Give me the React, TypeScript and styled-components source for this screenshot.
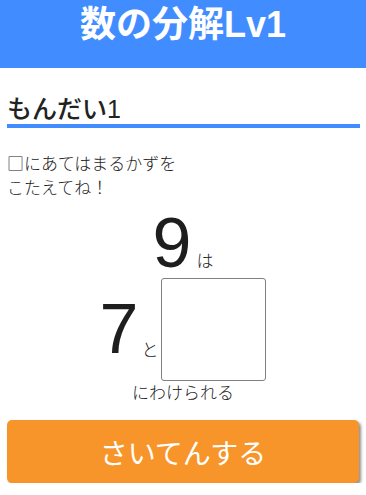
import React from "react";
import styled, { createGlobalStyle } from "styled-components";

const Global = createGlobalStyle`
  html, body { margin: 0; padding: 0; background: #fff; }
  body { font-family: "Liberation Sans", "Noto Sans CJK JP", sans-serif; color: #222; }
`;

const Page = styled.div`
  display: flex;
  flex-direction: column;
  width: 366px;
`;

const Header = styled.header`
  background: #418cff;
  height: 68px;
  box-sizing: border-box;
  padding-top: 3px;
  display: flex;
  justify-content: center;
  align-items: flex-start;
`;

const Title = styled.h1`
  margin: 0;
  color: #fff;
  font-size: 36px;
  line-height: 43px;
  font-weight: bold;
`;

const Problem = styled.h2`
  margin: 26px 6px 0 7px;
  font-size: 25px;
  line-height: 30px;
  font-weight: 500;
  color: #222;
  border-bottom: 4px solid #418cff;
`;

const Instruction = styled.p`
  margin: 23px 7px 0 7px;
  font-family: "Noto Sans CJK JP", sans-serif;
  font-size: 17px;
  line-height: 24px;
  font-weight: 300;
  color: #222;
`;

const Puzzle = styled.div`
  margin-top: 9px;
  display: flex;
  flex-direction: column;
  align-items: center;
`;

const Row = styled.div<{ $gap: number }>`
  display: flex;
  align-items: flex-end;
  gap: ${(p) => p.$gap}px;
`;

const BigNum = styled.span<{ $drop: number }>`
  font-family: "Liberation Sans", sans-serif;
  font-size: 70px;
  line-height: 70px;
  color: #1e1e1e;
  margin-bottom: ${(p) => p.$drop}px;
`;

const Small = styled.span<{ $drop: number }>`
  font-family: "Noto Sans CJK JP", sans-serif;
  font-size: 17px;
  line-height: 17px;
  font-weight: 300;
  color: #222;
  margin-bottom: ${(p) => p.$drop}px;
`;

const AnswerBox = styled.div`
  width: 105px;
  height: 103px;
  box-sizing: border-box;
  border: 1px solid #808080;
  border-radius: 3px;
  background: #fff;
`;

const Caption = styled.div`
  margin-top: 1px;
  font-family: "Noto Sans CJK JP", sans-serif;
  font-size: 17px;
  line-height: 20px;
  font-weight: 300;
  color: #222;
`;

const Submit = styled.button`
  margin: 18px 7px 0 7px;
  height: 63px;
  border: none;
  border-radius: 5px;
  background: #f7952a;
  color: #fff;
  font-family: "Noto Sans CJK JP", sans-serif;
  font-size: 28px;
  box-shadow: 2px 2px 3px rgba(0, 0, 0, 0.45);
  cursor: pointer;
`;

export default function App() {
  return (
    <>
      <Global />
      <Page>
        <Header>
          <Title>数の分解Lv1</Title>
        </Header>
        <Problem>もんだい1</Problem>
        <Instruction>
          □にあてはまるかずを
          <br />
          こたえてね！
        </Instruction>
        <Puzzle>
          <Row $gap={5}>
            <BigNum $drop={0}>9</BigNum>
            <Small $drop={10}>は</Small>
          </Row>
          <Row $gap={3}>
            <BigNum $drop={17}>7</BigNum>
            <Small $drop={24}>と</Small>
            <AnswerBox />
          </Row>
          <Caption>にわけられる</Caption>
        </Puzzle>
        <Submit>さいてんする</Submit>
      </Page>
    </>
  );
}
